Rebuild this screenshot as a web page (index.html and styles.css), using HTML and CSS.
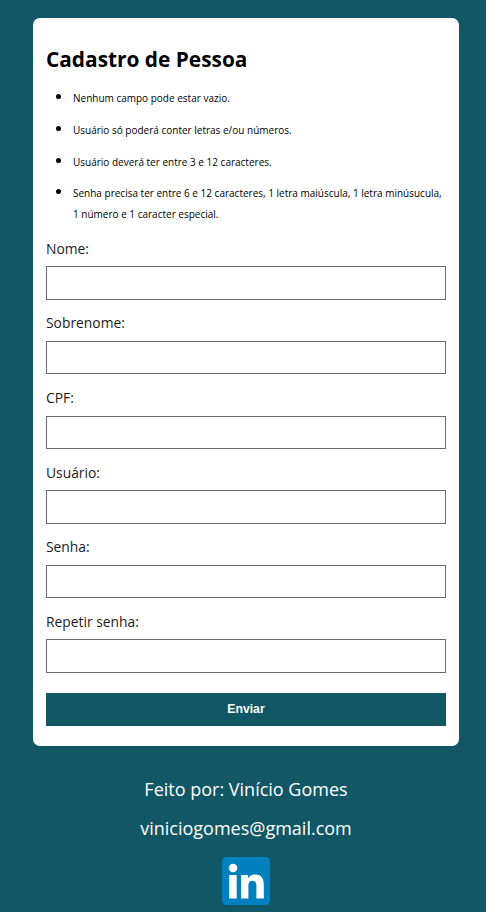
FILE: index.html
```html
<!DOCTYPE html>
<html lang="pt-BR">
<head>
<meta charset="utf-8">
<title>Cadastro de Pessoa</title>
<link rel="stylesheet" href="styles.css">
</head>
<body>
<main class="card">
  <h1 class="title">Cadastro de Pessoa</h1>
  <ul class="rules">
    <li>Nenhum campo pode estar vazio.</li>
    <li>Usuário só poderá conter letras e/ou números.</li>
    <li>Usuário deverá ter entre 3 e 12 caracteres.</li>
    <li>Senha precisa ter entre 6 e 12 caracteres, 1 letra maiúscula, 1 letra minúsucula, 1 número e 1 caracter especial.</li>
  </ul>
  <form class="form">
    <label class="field">Nome: <input type="text"></label>
    <label class="field">Sobrenome: <input type="text"></label>
    <label class="field">CPF: <input type="text"></label>
    <label class="field">Usuário: <input type="text"></label>
    <label class="field">Senha: <input type="password"></label>
    <label class="field">Repetir senha: <input type="password"></label>
    <button class="submit" type="button">Enviar</button>
  </form>
</main>
<footer class="footer">
  <p>Feito por: Vinício Gomes</p>
  <p>viniciogomes@gmail.com</p>
  <svg class="linkedin" viewBox="0 0 48 48" role="img" aria-label="LinkedIn">
    <rect width="48" height="48" rx="4.500" fill="#0080bf"/>
    <circle cx="11" cy="11" r="4.300" fill="#fff"/>
    <path fill="#fff" d="M7.200 18h7.500v23.500H7.200zM19 18h7v3.200c1-1.900 3.500-3.800 7-3.800 7.300 0 8.800 4.800 8.800 11.100v13h-7.400V30c0-2.700 0-6.200-3.800-6.200s-4.200 2.900-4.200 6v11.700H19z"/>
  </svg>
</footer>
</body>
</html>
```
FILE: styles.css
```css
* { box-sizing: border-box; }
body {
  margin: 0;
  height: 912px;
  overflow: hidden;
  padding-top: 18px;
  background: #115766;
  color: #000;
  font-family: "Open Sans", sans-serif;
}
.card {
  width: 426px;
  height: 728px;
  margin: 0 27px 0 33px;
  padding: 25px 13px 20px;
  border-radius: 7px;
  background: #fff;
}
.title { margin: 0; font-size: 20.850px; line-height: 32px; font-weight: 700; }
.rules {
  margin: 13px 0 0;
  padding-left: 27px;
  list-style: none;
  font-size: 10px;
  line-height: 21px;
}
.rules li { position: relative; margin-bottom: 10.800px; }
.rules li:last-child { margin-bottom: 0; }
.rules li::before {
  content: "";
  position: absolute;
  left: -17px;
  top: 6px;
  width: 5px;
  height: 5px;
  border-radius: 50%;
  background: #000;
}
.form { padding-top: 12.400px; }
.field { display: block; height: 74.6px; color: #1c1c1c; font-size: 13.850px; line-height: 21.3px; }
.field input {
  display: block;
  width: 100%;
  height: 33.33px;
  margin-top: 7.350px;
  border: 1px solid #6b6b6b;
  border-radius: 0;
  background: #fff;
}
.submit {
  display: block;
  width: 100%;
  height: 33px;
  margin-top: 7.650px;
  padding: 0 0 1px;
  border: 0;
  background: #115766;
  color: #fff;
  font: 700 12.200px "Liberation Sans", sans-serif;
}
.footer { padding: 29px 0 0 6px; text-align: center; color: #fff; font-size: 18px; line-height: 29px; }
.footer p { margin: 0 0 10px; }
.linkedin { display: block; width: 48px; height: 48px; margin: 14px auto 0; }
```
